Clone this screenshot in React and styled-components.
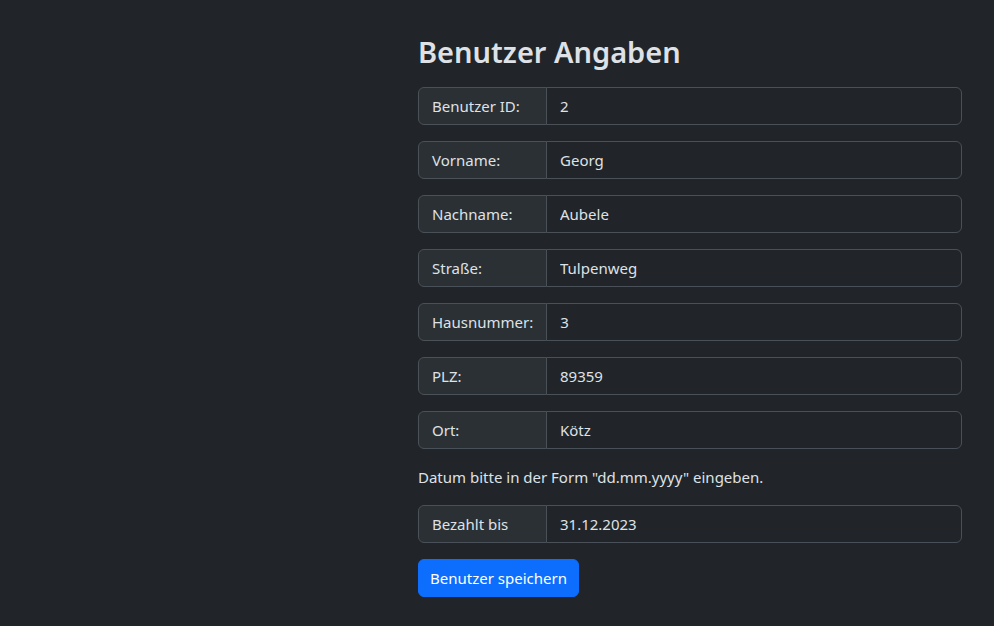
import styled, { createGlobalStyle } from 'styled-components';

const GlobalStyle = createGlobalStyle`
  html, body {
    margin: 0;
    background: #212529;
    color: #dee2e6;
    font-family: 'Noto Sans', 'Open Sans', sans-serif;
    font-size: 16px;
    line-height: 1.5;
  }
`;

const Page = styled.main`
  display: grid;
  grid-template-columns: 418px 544px;
  padding-top: 34px;
  min-height: 626px;
  box-sizing: border-box;
`;

const Form = styled.form`
  grid-column: 2;
  display: flex;
  flex-direction: column;
`;

const Title = styled.h2`
  font-size: 29px;
  font-weight: 600;
  line-height: 36px;
  margin: 0 0 17px;
  color: #dee2e6;
`;

const InputGroup = styled.div`
  display: flex;
  margin-bottom: 16px;
  height: 38px;
  box-sizing: border-box;
`;

const Label = styled.span`
  flex: 0 0 129px;
  box-sizing: border-box;
  display: flex;
  align-items: center;
  padding: 0 13px;
  font-size: 15px;
  background: #2b3035;
  border: 1px solid #495057;
  border-radius: 6px 0 0 6px;
`;

const Input = styled.input`
  flex: 1;
  min-width: 0;
  box-sizing: border-box;
  padding: 0 13px;
  margin-left: -1px;
  font: inherit;
  font-size: 15px;
  color: #dee2e6;
  background: #212529;
  border: 1px solid #495057;
  border-radius: 0 6px 6px 0;
  outline: none;
`;

const Hint = styled.p`
  margin: 0 0 16px;
  font-size: 15px;
  line-height: 24px;
`;

const Button = styled.button`
  align-self: flex-start;
  height: 38px;
  padding: 0 11px;
  font: inherit;
  font-size: 15px;
  color: #fff;
  background: #0d6efd;
  border: 1px solid #0d6efd;
  border-radius: 6px;
  cursor: pointer;
`;

const fields = [
  ['Benutzer ID:', '2'],
  ['Vorname:', 'Georg'],
  ['Nachname:', 'Aubele'],
  ['Straße:', 'Tulpenweg'],
  ['Hausnummer:', '3'],
  ['PLZ:', '89359'],
  ['Ort:', 'Kötz'],
];

const Field = ({ label, value }) => (
  <InputGroup>
    <Label>{label}</Label>
    <Input defaultValue={value} />
  </InputGroup>
);

export default function App() {
  return (
    <>
      <GlobalStyle />
      <Page>
        <Form onSubmit={e => e.preventDefault()}>
          <Title>Benutzer Angaben</Title>
          {fields.map(([label, value]) => (
            <Field key={label} label={label} value={value} />
          ))}
          <Hint>Datum bitte in der Form "dd.mm.yyyy" eingeben.</Hint>
          <Field label="Bezahlt bis" value="31.12.2023" />
          <Button type="submit">Benutzer speichern</Button>
        </Form>
      </Page>
    </>
  );
}
